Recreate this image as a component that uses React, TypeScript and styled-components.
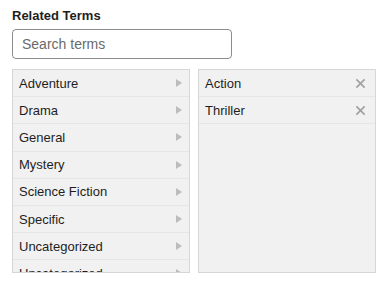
import styled, { createGlobalStyle } from 'styled-components';

const GlobalStyle = createGlobalStyle`
  body {
    margin: 0;
    background: #ffffff;
    font-family: "Liberation Sans", Arial, sans-serif;
    color: #1e1e1e;
  }
`;

const Wrapper = styled.div`
  padding: 8px 12px 0 12px;
  width: 364px;
`;

const Label = styled.div`
  font-size: 13px;
  font-weight: 700;
  color: #1e1e1e;
  line-height: 16px;
  margin-bottom: 5px;
`;

const SearchInput = styled.input`
  box-sizing: border-box;
  display: block;
  width: 220px;
  height: 30px;
  padding: 0 9px;
  border: 1px solid #8c8c8c;
  border-radius: 4px;
  font-family: inherit;
  font-size: 14px;
  color: #1e1e1e;
  outline: none;

  &::placeholder {
    color: #6a6a6a;
  }
`;

const Columns = styled.div`
  display: flex;
  gap: 8px;
  margin-top: 10px;
`;

const Panel = styled.div`
  box-sizing: border-box;
  width: 178px;
  height: 204px;
  background: #f1f1f1;
  border: 1px solid #d6d6d6;
  overflow: hidden;
`;

const Row = styled.div`
  display: flex;
  align-items: center;
  justify-content: space-between;
  height: 27.2px;
  padding: 0 7px 0 6px;
  border-bottom: 1px solid #e6e6e6;
  font-size: 13px;
  color: #1e1e1e;
  box-sizing: border-box;
`;

const Arrow = styled.span`
  width: 0;
  height: 0;
  border-top: 4px solid transparent;
  border-bottom: 4px solid transparent;
  border-left: 6px solid #bcbcbc;
`;

const RemoveIcon = styled.svg`
  width: 11px;
  height: 11px;
  margin-right: 2px;
`;

const categories = [
  'Adventure',
  'Drama',
  'General',
  'Mystery',
  'Science Fiction',
  'Specific',
  'Uncategorized',
  'Uncategorized',
];

const selected = ['Action', 'Thriller'];

export default function App() {
  return (
    <>
      <GlobalStyle />
      <Wrapper>
        <Label>Related Terms</Label>
        <SearchInput placeholder="Search terms" />
        <Columns>
          <Panel>
            {categories.map((c, i) => (
              <Row key={i}>
                <span>{c}</span>
                <Arrow />
              </Row>
            ))}
          </Panel>
          <Panel>
            {selected.map((s) => (
              <Row key={s}>
                <span>{s}</span>
                <RemoveIcon viewBox="0 0 12 12">
                  <path d="M1.5 1.5 L10.5 10.5 M10.5 1.5 L1.5 10.5" stroke="#a0a0a0" strokeWidth="1.8" />
                </RemoveIcon>
              </Row>
            ))}
          </Panel>
        </Columns>
      </Wrapper>
    </>
  );
}
